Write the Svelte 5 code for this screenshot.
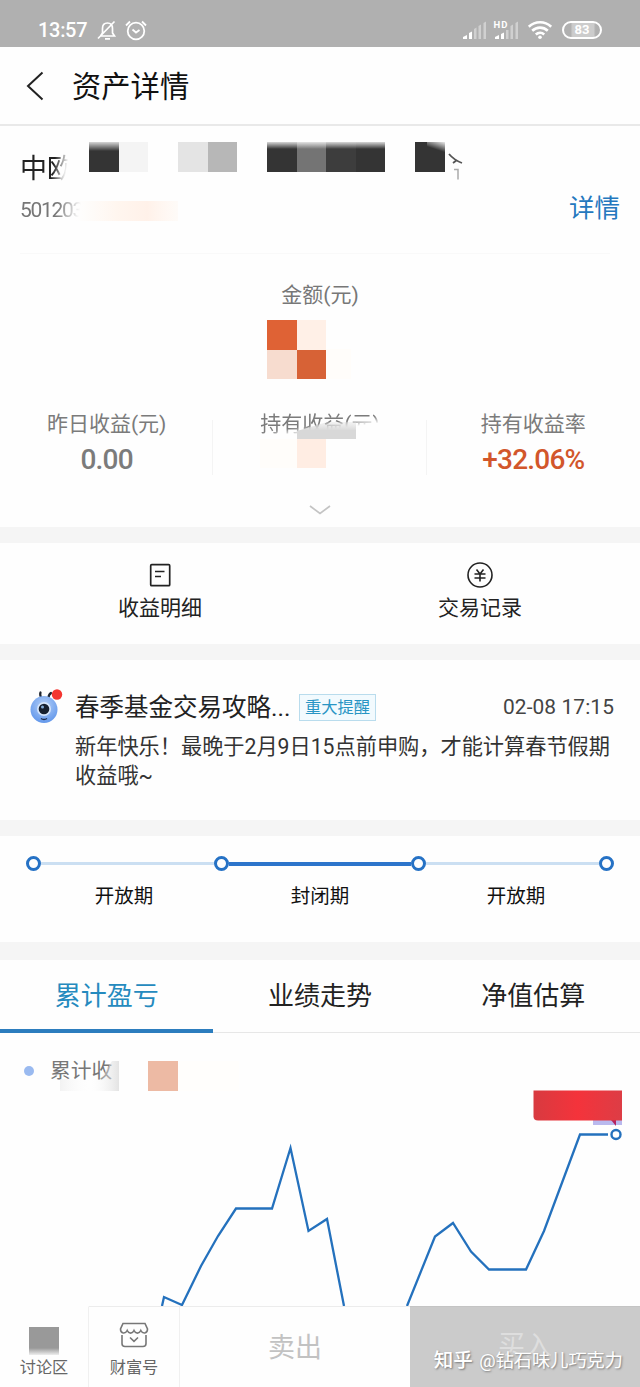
<script lang="ts">
  const earnings = [
    { label: '昨日收益(元)', value: '0.00', tone: 'muted' },
    { label: '持有收益(元)', value: '', tone: 'faded' },
    { label: '持有收益率', value: '+32.06%', tone: 'gain' }
  ];

  const periods = [
    { label: '开放期', active: false },
    { label: '封闭期', active: true },
    { label: '开放期', active: false }
  ];

  const tabs = ['累计盈亏', '业绩走势', '净值估算'];
  let activeTab = $state(0);

  // x, y, width, height, fill
  const mosaic: [number, number, number, number, string][] = [
    [89, 16, 30, 30, '#343434'],
    [119, 16, 29, 30, '#f4f4f4'],
    [178, 16, 29.5, 30, '#e4e4e4'],
    [207.5, 16, 29.5, 30, '#b7b7b7'],
    [267, 16, 29.5, 30, '#343434'],
    [296.5, 16, 29.5, 30, '#747474'],
    [326, 16, 30, 30, '#3d3d3d'],
    [356, 16, 29, 30, '#343434'],
    [415, 16, 30, 30, '#343434'],
    [326, 223, 25, 30, '#fffdfa'],
    [267, 194, 29.5, 29.5, '#df6235'],
    [296.5, 194, 29.5, 29.5, '#fff0e7'],
    [267, 223.5, 29.5, 29.5, '#f7dccf'],
    [296.5, 223.5, 29.5, 29.5, '#d76236'],
    [260, 313, 37, 29, '#fffdfa'],
    [297, 313, 29, 29, '#ffede3']
  ];

  const lines = [
    '162,273 164,264 182,272 201,233 218,203 236,175.5 272,175.5 290.5,115 308.5,198 327,186 344,273',
    '407,273 435,203.5 453,190 471,218.5 489,236.5 526,236.5 544,198 580,101.5 608,101.5'
  ];
</script>

<div class="page">
  <div class="status">
    <span class="clock">13:57</span>
    <svg class="bell" width="20" height="22" viewBox="0 0 20 22" fill="none" stroke="#fff" stroke-width="1.7">
      <path d="M3.5 17h14l-2-3V9.5C15.500 6 13.500 4 10.500 4S5.500 6 5.500 9.500V14l-2 3M8 19.800h5M17.500 2.500 1 19.500" />
    </svg>
    <svg class="alarm" width="22" height="22" viewBox="0 0 22 22" fill="none" stroke="#fff" stroke-width="1.800">
      <circle cx="11" cy="12" r="8.300" />
      <path d="M1 6.500 5 2.500M21 6.500 17 2.500M7.500 10.500l3.500 3 3.500-2.500" />
    </svg>
    <div class="radios">
      <svg width="25" height="22" viewBox="0 0 25 22">
        <path d="M1 20v-2l4-2v4zM7 20v-6l3-1.500v7.500z" fill="#fff" />
        <path d="M12 20V10l2.500-1.500V20zM16.500 20V7L19 5.500V20zM21.500 20V4L24 2.500V20z" fill="#d0d0d0" />
      </svg>
      <svg width="27" height="22" viewBox="0 0 27 22">
        <path d="M2 20v-2l4-2v4zM8 20v-5l3-1.500v6.500z" fill="#fff" />
        <path d="M13 20V11h2.500v9zM17.500 20V7L20 5.500V20zM22.500 20V4L25 2.500V20z" fill="#d0d0d0" />
        <text x="0.500" y="9" font-size="9.500" font-weight="700" font-family="Roboto" fill="#fff" textLength="14">HD</text>
      </svg>
      <svg class="wifi" width="26" height="22" viewBox="0 0 26 22" fill="none" stroke="#fff" stroke-width="2.600">
        <path d="M1.800 7.800c6.500-6 16-6 22.400 0M5.200 11.800c4.500-4.200 11-4.200 15.600 0M8.800 15.500c2.500-2.200 6-2.200 8.400 0" />
        <circle cx="13" cy="18.300" r="1.800" fill="#fff" stroke="none" />
      </svg>
      <span class="battery">83</span>
    </div>
  </div>

  <header>
    <svg width="18" height="30" viewBox="0 0 18 30" fill="none" stroke="#222" stroke-width="2">
      <path d="M16.500 1.500 2 15l14.500 13.500" />
    </svg>
    <h1>资产详情</h1>
  </header>

  <section class="fund">
    <div class="fund-head">
      <div>
        <div class="fund-name">中欧</div>
        <div class="fund-code">501203</div>
      </div>
      <span class="detail">详情</span>
    </div>
    <div class="amount">金额(元)</div>
    <div class="earnings">
      {#each earnings as item}
        <div class="earning {item.tone}">
          <span>{item.label}</span>
          <strong>{item.value}</strong>
        </div>
      {/each}
    </div>
    <svg class="more" width="22" height="12" viewBox="0 0 22 12" fill="none" stroke="#c4c4c4" stroke-width="1.700">
      <path d="M1 2l10 7.500L21 2" />
    </svg>

    <svg class="mosaic" width="640" height="401" viewBox="0 0 640 401">
      <defs>
        <linearGradient id="top-fade" x1="0" y1="0" x2="0" y2="1">
          <stop offset="0" stop-color="#fff" stop-opacity="0.8" />
          <stop offset="1" stop-color="#fff" stop-opacity="0" />
        </linearGradient>
        <linearGradient id="corner-fade" x1="1" y1="0" x2="0.500" y2="1">
          <stop offset="0" stop-color="#fff" stop-opacity="0.9" />
          <stop offset="0.700" stop-color="#fff" stop-opacity="0" />
        </linearGradient>
        <linearGradient id="grey-fade" x1="0" y1="0" x2="0" y2="1">
          <stop offset="0" stop-color="#ddd" stop-opacity="0.3" />
          <stop offset="0.500" stop-color="#d8d8d8" />
          <stop offset="1" stop-color="#d8d8d8" />
        </linearGradient>
        <linearGradient id="peach" x1="0" y1="0" x2="1" y2="0">
          <stop offset="0" stop-color="#fff7f0" stop-opacity="0" />
          <stop offset="0.400" stop-color="#fff6ef" />
          <stop offset="0.700" stop-color="#fff1e9" />
          <stop offset="1" stop-color="#fff6ef" stop-opacity="0.4" />
        </linearGradient>
      </defs>
      {#each mosaic as [x, y, width, height, fill]}
        <rect {x} {y} {width} {height} {fill} shape-rendering="crispEdges" />
      {/each}
      <rect x="89" y="16" width="30" height="9" fill="url(#top-fade)" />
      <rect x="267" y="16" width="118" height="7" fill="url(#top-fade)" />
      <rect x="427" y="16" width="18" height="12" fill="url(#corner-fade)" />
      <rect x="76" y="75" width="102" height="20" fill="url(#peach)" />
      <path d="M449 28q5 6 13 9M453 37l4-3" fill="none" stroke="#555" stroke-width="1.800" />
      <path d="M454 43.500h4v10" fill="none" stroke="#aaa" stroke-width="1.500" />
      <path d="M297 305l30-9h29v17h-59z" fill="url(#grey-fade)" />
      <path d="M20 127.500h590" stroke="#f9f9f9" />
    </svg>
  </section>

  <section class="actions">
    <div class="action">
      <svg width="26" height="28" viewBox="0 0 26 28" fill="none" stroke="#222" stroke-width="1.700">
        <rect x="3.700" y="3.700" width="19" height="21" rx="1" />
        <path d="M8 10.500h9.500M8 15.500h6" />
      </svg>
      <span>收益明细</span>
    </div>
    <div class="action">
      <svg width="26" height="28" viewBox="0 0 26 28" fill="none" stroke="#222" stroke-width="1.600">
        <circle cx="13" cy="14" r="12" />
        <path d="M9.500 8.500l3.500 4.500 3.500-4.500M7.500 13h11M7.500 17h11M13 13v7.500" />
      </svg>
      <span>交易记录</span>
    </div>
  </section>

  <section class="notice">
    <svg class="ant" width="34" height="36" viewBox="0 0 34 36">
      <defs>
        <radialGradient id="ant-body" cx="0.500" cy="0.350" r="0.700">
          <stop offset="0" stop-color="#b5d0f8" />
          <stop offset="1" stop-color="#5c93ea" />
        </radialGradient>
      </defs>
      <path d="M12.500 9c-1-1.500-2-3-1-5.500M19.500 9c0-2.500 1-4 2.500-5" fill="none" stroke="#1d2430" stroke-width="2.200" stroke-linecap="round" />
      <circle cx="15" cy="20.500" r="13.500" fill="url(#ant-body)" />
      <circle cx="15" cy="20" r="7" fill="#d5e5fb" />
      <circle cx="15" cy="20" r="5.300" fill="#17202f" />
      <circle cx="13.500" cy="18" r="1.500" fill="#84acd8" />
      <path d="M12 29.500q3 2 6 0" fill="none" stroke="#1d2c4c" stroke-width="1.500" />
      <circle cx="28" cy="5.500" r="5.200" fill="#f43530" />
    </svg>
    <div class="notice-main">
      <div class="notice-title">
        <span class="title-text">春季基金交易攻略...</span>
        <span class="tag">重大提醒</span>
        <time>02-08 17:15</time>
      </div>
      <p>新年快乐！最晚于2月9日15点前申购，才能计算春节假期收益哦~</p>
    </div>
  </section>

  <section class="timeline">
    <div class="track">
      <i></i>
      {#each periods as period}
        <b class:active={period.active}></b><i></i>
      {/each}
    </div>
    <div class="periods">
      {#each periods as period}
        <span>{period.label}</span>
      {/each}
    </div>
  </section>

  <nav>
    {#each tabs as tab, index}
      <button class:selected={activeTab === index} onclick={() => (activeTab = index)}>{tab}</button>
    {/each}
  </nav>

  <section class="chart">
    <div class="legend"><i></i><span>累计收</span></div>
    <svg width="640" height="273" viewBox="0 0 640 273">
      <defs>
        <linearGradient id="legend-blur" x1="0" y1="0" x2="1" y2="0">
          <stop offset="0" stop-color="#ddd" stop-opacity="0.500" />
          <stop offset="0.500" stop-color="#fff" stop-opacity="0.1" />
          <stop offset="1" stop-color="#d8d8d8" />
        </linearGradient>
        <linearGradient id="red-block" x1="0" y1="0" x2="1" y2="0">
          <stop offset="0" stop-color="#d83a40" />
          <stop offset="0.500" stop-color="#f4333b" />
          <stop offset="1" stop-color="#dd3d45" />
        </linearGradient>
      </defs>
      <path d="M60 46h40l12-18h7v30H60z" fill="url(#legend-blur)" opacity="0.7" />
      <rect x="148" y="28" width="30" height="30" fill="#edbaa4" />
      <rect x="178" y="28" width="61" height="30" fill="#fffefc" />
      {#each lines as points}
        <polyline {points} fill="none" stroke="#2471bd" stroke-width="2.300" />
      {/each}
      <rect x="593" y="87" width="29" height="5" fill="#b9b9ee" />
      <path d="M611 87h5v6z" fill="#b52462" />
      <path d="M533.500 57.500H622v30h-84q-4.500 0-4.500-4z" fill="url(#red-block)" />
      <circle cx="616" cy="101.500" r="4.500" fill="#fff" stroke="#2471bd" stroke-width="2.400" />
    </svg>
  </section>

  <footer>
    <div class="tool forum">
      <i></i>
      <span>讨论区</span>
    </div>
    <div class="tool shop">
      <svg width="30" height="26" viewBox="0 0 30 26" fill="none" stroke="#777" stroke-width="1.600">
        <path d="M4 1.500h22l2.500 5.500c0 5-5 5-6.700 1.500-1.600 3.500-5.200 3.500-6.800 0-1.600 3.500-5.200 3.500-6.800 0C6.500 12 1.500 12 1.500 7zM3 13v8.500c0 2 1 3 3 3h18c2 0 3-1 3-3V13M11 15.500l4 3.800 4-3.800" />
      </svg>
      <span>财富号</span>
    </div>
    <div class="sell">卖出</div>
    <div class="buy">
      <span>买入</span>
      <div class="watermark"><b>知乎</b> @钻石味儿巧克力</div>
    </div>
  </footer>
</div>

<style>
  :global(body) {
    background: #fff;
  }

  .page {
    width: 640px;
    height: 1387px;
    overflow: hidden;
    display: flex;
    flex-direction: column;
    gap: 16px;
    background: #f5f5f5;
    color: #222;
    font-family: Roboto, 'Noto Sans CJK SC', sans-serif;
  }

  .page > * {
    flex: none;
    box-sizing: border-box;
    background: #fefefe;
  }

  .page svg {
    display: block;
  }

  /* Status bar */
  .page > .status {
    height: 47px;
    margin-bottom: -16px;
    padding: 12px 38px 0 38px;
    display: flex;
    align-items: center;
    background: #b0b0b0;
    color: #fff;
  }

  .clock {
    width: 49px;
    font-size: 20px;
    font-weight: 500;
    letter-spacing: -0.3px;
  }

  .bell {
    margin-left: 10px;
  }

  .alarm {
    margin-left: 8px;
  }

  .radios {
    margin-left: auto;
    display: flex;
    align-items: center;
    gap: 6px;
  }

  .wifi {
    margin-left: 1px;
  }

  .battery {
    box-sizing: border-box;
    width: 40px;
    height: 18px;
    margin-left: 3px;
    border: 2px solid #fff;
    border-radius: 9px;
    background: linear-gradient(90deg, #b0b0b0 18%, #ccc 24% 82%, #b0b0b0 88%);
    font-size: 13px;
    font-weight: 700;
    line-height: 14px;
    text-align: center;
  }

  header {
    height: 79px;
    margin-bottom: -16px;
    padding: 0 26px;
    display: flex;
    align-items: center;
    gap: 28px;
    border-bottom: 2px solid #e9e9e9;
  }

  h1 {
    margin: 2px 0 0;
    color: #111;
    font-size: 29.3px;
    font-weight: 400;
    line-height: 40px;
  }

  /* Fund summary */
  .fund {
    position: relative;
    height: 401px;
    padding-top: 25px;
  }

  .fund-head {
    display: flex;
    justify-content: space-between;
    padding: 0 20px;
  }

  .fund-name {
    width: 56px;
    font-size: 27px;
    line-height: 36px;
    mask-image: linear-gradient(100deg, #000 58%, transparent 80%);
  }

  .fund-code {
    margin-top: 9px;
    color: #777;
    font-size: 21px;
    letter-spacing: -1.3px;
    line-height: 28px;
    mask-image: linear-gradient(100deg, #000 58%, transparent 92%);
  }

  .detail {
    margin-top: 39px;
    color: #2478be;
    font-size: 25.5px;
    line-height: 36px;
  }

  .amount {
    margin-top: 54px;
    color: #777;
    font-size: 21px;
    line-height: 30px;
    text-align: center;
  }

  .earnings {
    margin-top: 99px;
    display: grid;
    grid-template-columns: repeat(3, 1fr);
  }

  .earning {
    height: 66px;
    display: flex;
    flex-direction: column;
    align-items: center;
    color: #7b7b7b;
    font-size: 21px;
    line-height: 30px;
    background: linear-gradient(#f4f4f4, #f4f4f4) right 11px / 1px 60px no-repeat;
  }

  .earning:last-child {
    background: none;
  }

  .earning strong {
    margin-top: 1px;
    font-size: 28px;
    font-weight: 500;
    letter-spacing: -0.8px;
    line-height: 40px;
  }

  .earning.gain strong {
    color: #d2562b;
  }

  .faded span {
    mask-image: linear-gradient(172deg, #000 50%, transparent 66%);
  }

  .more {
    margin: 29px auto 0;
  }

  .mosaic {
    position: absolute;
    inset: 0;
  }

  .actions {
    height: 101px;
    display: grid;
    grid-template-columns: 1fr 1fr;
  }

  .action {
    padding-top: 18px;
    display: flex;
    flex-direction: column;
    align-items: center;
    gap: 4px;
    font-size: 21px;
    line-height: 30px;
  }

  /* Notice */
  .notice {
    height: 160px;
    padding: 29px 26px 0 29px;
    display: flex;
    gap: 12px;
  }

  .notice-main {
    flex: 1;
  }

  .notice-title {
    display: flex;
    align-items: center;
    height: 36px;
  }

  .title-text {
    width: 224px;
    margin-top: -4px;
    font-size: 24.5px;
    white-space: nowrap;
  }

  .tag {
    box-sizing: border-box;
    height: 27px;
    padding: 0 5px;
    border: 1px solid #b9dced;
    background: #f2fafe;
    color: #2895c4;
    font-size: 16.3px;
    line-height: 25px;
  }

  time {
    margin-left: auto;
    color: #444;
    font-size: 20.9px;
    letter-spacing: 0.1px;
  }

  .notice p {
    margin: 7px -6px 0 0;
    color: #333;
    font-size: 21.2px;
    line-height: 29px;
  }

  /* Open and closed periods */
  .timeline {
    height: 106px;
    padding: 20px 26px 0;
  }

  .track {
    display: flex;
    align-items: center;
  }

  .track i {
    box-sizing: border-box;
    width: 15px;
    height: 15px;
    border: 3px solid #2672c5;
    border-radius: 50%;
  }

  .track b {
    flex: 173;
    height: 3px;
    background: #cbdff2;
  }

  .track b.active {
    flex: 181;
    height: 4px;
    background: #2d75cb;
  }

  .periods {
    margin-top: 10px;
    display: grid;
    grid-template-columns: repeat(3, 196px);
    color: #111;
    font-size: 19.5px;
    line-height: 32px;
    text-align: center;
  }

  nav {
    height: 73px;
    margin-top: 2px;
    margin-bottom: -16px;
    display: grid;
    grid-template-columns: repeat(3, 1fr);
    border-bottom: 1px solid #e7e7e7;
  }

  nav button {
    height: 73px;
    padding: 0 0 3px;
    border: 0;
    border-bottom: 4px solid transparent;
    background: none;
    color: #222;
    font: 26px Roboto, 'Noto Sans CJK SC', sans-serif;
  }

  nav .selected {
    border-color: #2c7dbe;
    color: #258abe;
  }

  .chart {
    position: relative;
    height: 273px;
    margin-bottom: -16px;
  }

  .chart svg {
    position: absolute;
    inset: 0;
  }

  .legend {
    padding: 22px 24px;
    display: flex;
    align-items: center;
    gap: 16px;
    color: #777;
    font-size: 20.8px;
    line-height: 32px;
  }

  .legend i {
    width: 10px;
    height: 10px;
    border-radius: 50%;
    background: #9abaf0;
  }

  /* Bottom bar */
  footer {
    position: relative;
    height: 81px;
    display: grid;
    grid-template-columns: 89px 91px 230px 230px;
  }

  footer > div {
    box-sizing: border-box;
    border-top: 1px solid #ececec;
    text-align: center;
  }

  .tool {
    display: flex;
    flex-direction: column;
    align-items: center;
    border-right: 1px solid #f0f0f0;
    color: #666;
    font-size: 16.2px;
    line-height: 24px;
  }

  footer > .forum {
    padding-top: 20px;
    border-top-color: transparent;
  }

  .forum i {
    width: 30px;
    height: 28px;
    margin-bottom: 1px;
    background: linear-gradient(#999 75%, #eee);
  }

  .shop {
    padding-top: 15px;
  }

  .shop span {
    margin-top: 8px;
  }

  .sell {
    color: #c2c2c2;
    font-size: 27px;
    line-height: 82px;
  }

  footer > .buy {
    border-top-color: #c4c4c4;
    background: #cbcbcb;
    color: #dedede;
    font-size: 27px;
    line-height: 79px;
  }

  .watermark {
    position: absolute;
    right: 17px;
    bottom: 12px;
    color: #fff;
    font-size: 18.2px;
    line-height: 28px;
    white-space: nowrap;
    text-shadow: 1px 1px 2px #777;
  }

  .watermark b {
    margin-right: 2px;
    font-size: 19.5px;
    font-weight: 500;
  }
</style>
